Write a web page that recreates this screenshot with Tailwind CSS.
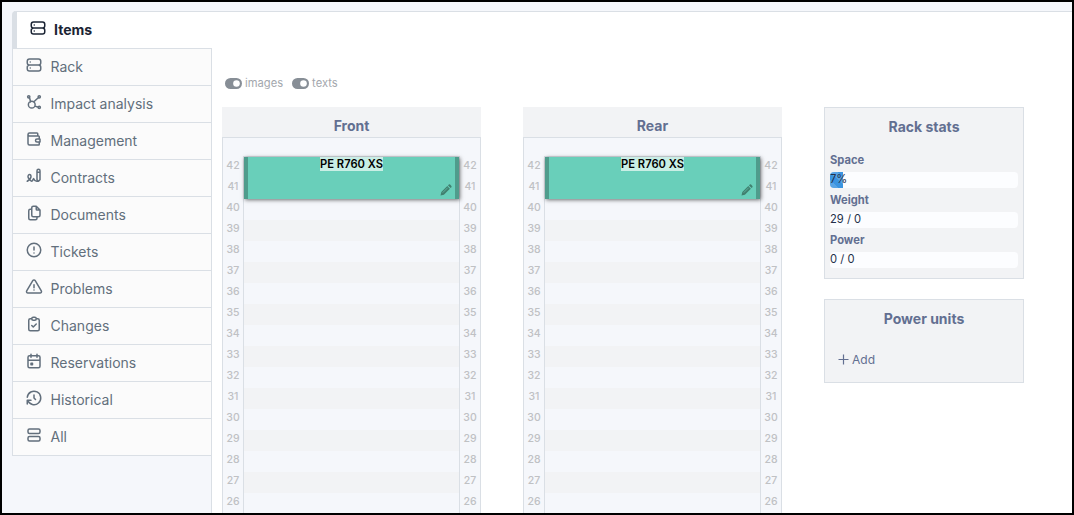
<!DOCTYPE html>
<html lang="en">
<head>
<meta charset="utf-8">
<title>Rack - Items</title>
<script src="https://cdn.jsdelivr.net/npm/@tailwindcss/browser@4"></script>
</head>
<body class="font-['Inter',sans-serif]">
<div class="w-[1074px] h-[515px] overflow-hidden border-2 border-black bg-[#f5f7fb] pl-[10px] pt-[9px] flex">
  <nav id="tabs" class="w-[199px] shrink-0 text-[14px] text-[#626f7c]">
    <a class="flex items-center w-[200px] h-[38px] relative border-t border-b border-[#dadfe5] border-l-[5px] border-l-[#dadfe5] rounded-tl-[4px] bg-white pl-[12px] pb-[2px] text-[#1b2434] font-bold">
      <svg class="size-[18px] mr-[7px] relative -top-px" viewBox="0 0 24 24" fill="none" stroke="currentColor" stroke-width="2" stroke-linecap="round" stroke-linejoin="round"><path d="M3 7a3 3 0 0 1 3-3h12a3 3 0 0 1 3 3v2a3 3 0 0 1-3 3H6a3 3 0 0 1-3-3zM3 15a3 3 0 0 1 3-3h12a3 3 0 0 1 3 3v2a3 3 0 0 1-3 3H6a3 3 0 0 1-3-3zM7 8v.01M7 16v.01"/></svg>Items</a>
  </nav>
  <main class="flex-1 border-t border-l border-[#dadfe5] bg-white pl-[10px] h-[502px]">
    <div class="flex items-center pt-[61px] h-[81px] pl-[3px] text-[11.2px] text-[#a3a7ad]">
      <svg class="w-[17px] h-[11px] mr-[3px]" viewBox="0 0 17 11"><rect width="17" height="11" rx="5.5" fill="#878e96"/><circle cx="11.5" cy="5.5" r="3.3" fill="#fff"/></svg>images
      <svg class="w-[17px] h-[11px] mr-[3px] ml-[9px]" viewBox="0 0 17 11"><rect width="17" height="11" rx="5.5" fill="#878e96"/><circle cx="11.5" cy="5.5" r="3.3" fill="#fff"/></svg>texts
    </div>
    <div class="flex items-start pt-[14px]">
      <section class="w-[259px] mr-[42px]">
        <h2 class="h-[30px] pt-[9px] bg-[#f2f3f5] text-center text-[14px] leading-5 font-bold text-[#626f91]">Front</h2>
        <div class="rack flex h-[420px] overflow-hidden border border-b-0 border-[#dadfe5] bg-[#f5f7fb] pt-[18px]"></div>
      </section>
      <section class="w-[259px] mr-[42px]">
        <h2 class="h-[30px] pt-[9px] bg-[#f2f3f5] text-center text-[14px] leading-5 font-bold text-[#626f91]">Rear</h2>
        <div class="rack flex h-[420px] overflow-hidden border border-b-0 border-[#dadfe5] bg-[#f5f7fb] pt-[18px]"></div>
      </section>
      <aside class="w-[200px]">
        <section class="h-[172px] border border-[#dadfe5] bg-[#f2f3f5] px-[5px] pt-[9px] text-[11.2px]">
          <h2 class="text-center text-[14px] leading-5 font-bold text-[#626f91]">Rack stats</h2>
          <h3 class="mt-[15px] leading-[17px] h-4 font-bold text-[#626f91]">Space</h3>
          <div class="mt-[4px] w-[188px] h-[16px] rounded-[4px] overflow-hidden bg-[#fcfdff] text-[#243049]">
            <p class="w-[13px] h-[16px] leading-[15px] whitespace-nowrap bg-[#3b94e0] bg-[linear-gradient(45deg,#ffffff26_25%,transparent_25%,transparent_50%,#ffffff26_50%,#ffffff26_75%,transparent_75%)] bg-[length:16px_16px]">7%</p>
          </div>
          <h3 class="mt-[4px] leading-[17px] h-4 font-bold text-[#626f91]">Weight</h3>
          <p class="mt-[4px] w-[188px] h-[16px] leading-[15px] rounded-[4px] bg-[#fcfdff] text-[#243049]">29 / 0</p>
          <h3 class="mt-[4px] leading-[17px] h-4 font-bold text-[#626f91]">Power</h3>
          <p class="mt-[4px] w-[188px] h-[16px] leading-[15px] rounded-[4px] bg-[#fcfdff] text-[#243049]">0 / 0</p>
        </section>
        <section class="mt-[20px] h-[84px] border border-[#dadfe5] bg-[#f2f3f5] pt-[9px]">
          <h2 class="text-center text-[14px] leading-5 font-bold text-[#626f91]">Power units</h2>
          <p class="mt-[21px] pl-[13px] flex items-center text-[12px] leading-5 text-[#626f91]">
            <svg class="size-[11px] mr-[3px] relative -top-px" viewBox="0 0 11 11" stroke="currentColor" stroke-width="1.2"><path d="M.5 5.5h10M5.5.5v10"/></svg>Add</p>
        </section>
      </aside>
    </div>
  </main>
</div>
<script>
const tabs = [
  ['Rack', 'M3 7a3 3 0 0 1 3-3h12a3 3 0 0 1 3 3v2a3 3 0 0 1-3 3H6a3 3 0 0 1-3-3zM3 15a3 3 0 0 1 3-3h12a3 3 0 0 1 3 3v2a3 3 0 0 1-3 3H6a3 3 0 0 1-3-3zM7 8v.01M7 16v.01'],
  ['Impact analysis', 'M3.500 5a1.500 1.500 0 1 0 3 0a1.500 1.500 0 1 0-3 0M17.500 5a1.500 1.500 0 1 0 3 0a1.500 1.500 0 1 0-3 0M17.500 19a1.500 1.500 0 1 0 3 0a1.500 1.500 0 1 0-3 0M4.500 15.500a4.500 4.500 0 1 0 9 0a4.500 4.500 0 1 0-9 0M6 6l1.500 6M18 6l-6.500 6M13.500 17.500l4 1.500'],
  ['Management', 'M17 8V5a1 1 0 0 0-1-1H6a2 2 0 0 0 0 4h12a1 1 0 0 1 1 1v3m0 4v3a1 1 0 0 1-1 1H6a2 2 0 0 1-2-2V6M20 12v4h-4a2 2 0 0 1 0-4h4'],
  ['Contracts', 'M20 17V5c0-1.100-.9-2-2-2s-2 .9-2 2v12l2 2zM16 7h4M3 19c3.300-2 5-4 5-6c0-3-1-3-2-3s-2.030 1.085-2 3c.034 2.048 1.658 2.877 2.500 4C8 19 9 19.500 10 18c.667-1 1.167-1.833 1.500-2.500c1 2.333 2.333 3.500 4 3.500h2.500'],
  ['Documents', 'M15 3v4a1 1 0 0 0 1 1h4M18 17h-7a2 2 0 0 1-2-2V5a2 2 0 0 1 2-2h4l5 5v7a2 2 0 0 1-2 2zM16 17v2a2 2 0 0 1-2 2H7a2 2 0 0 1-2-2V9a2 2 0 0 1 2-2h2'],
  ['Tickets', 'M3 12a9 9 0 1 0 18 0a9 9 0 1 0-18 0M12 8v4M12 16h.01'],
  ['Problems', 'M12 9v4M10.363 3.591L2.257 17.125a1.914 1.914 0 0 0 1.636 2.871h16.214a1.914 1.914 0 0 0 1.636-2.870L13.637 3.591a1.914 1.914 0 0 0-3.274 0zM12 16h.01'],
  ['Changes', 'M9 5H7a2 2 0 0 0-2 2v12a2 2 0 0 0 2 2h10a2 2 0 0 0 2-2V7a2 2 0 0 0-2-2h-2M9 5a2 2 0 0 1 2-2h2a2 2 0 0 1 0 4h-2a2 2 0 0 1-2-2M9 14l2 2l4-4'],
  ['Reservations', 'M4 7a2 2 0 0 1 2-2h12a2 2 0 0 1 2 2v12a2 2 0 0 1-2 2H6a2 2 0 0 1-2-2zM16 3v4M8 3v4M4 11h16M8 15h2v2H8z'],
  ['Historical', 'M12 8v4l2 2M3.050 11a9 9 0 1 1 .5 4M3 20v-5h5'],
  ['All', 'M4 6a2 2 0 0 1 2-2h12a2 2 0 0 1 2 2v2a2 2 0 0 1-2 2H6a2 2 0 0 1-2-2zM4 16a2 2 0 0 1 2-2h12a2 2 0 0 1 2 2v2a2 2 0 0 1-2 2H6a2 2 0 0 1-2-2z']
];
document.getElementById('tabs').insertAdjacentHTML('beforeend', tabs.map(([name, path]) => `
  <a class="flex items-center h-[37px] border-b border-l border-[#dadfe5] bg-[#fbfbfb] pl-[12px] pb-[2px]">
    <svg class="size-[18px] mr-[7.5px] relative -top-px" viewBox="0 0 24 24" fill="none" stroke="currentColor" stroke-width="2" stroke-linecap="round" stroke-linejoin="round"><path d="${path}"/></svg>${name}</a>`).join(''));

const units = Array.from({length: 17}, (_, i) => 42 - i);
const labels = units.map(u => `<li class="h-[21px] leading-[20px]">${u}</li>`).join('');
const slots = units.map((u, i) => `<li class="h-[21px] ${i % 2 ? 'bg-[#f2f3f5]' : ''}"></li>`).join('');
document.querySelectorAll('.rack').forEach(r => r.innerHTML = `
  <ol class="w-[20px] shrink-0 text-center text-[10.5px] font-medium text-[#bfc1c4]">${labels}</ol>
  <div class="w-[217px] h-[420px] shrink-0 relative border-t border-x border-[#dadfe5]">
    <ol>${slots}</ol>
    <div class="absolute top-0 left-0 w-[215px] h-[42px] bg-[#69cfba] border-x-4 border-[#4f9c8c] text-center leading-[14px] shadow-[1px_1px_4px_0_#00000090]">
      <span class="inline-block h-[14px] bg-[#c9eee5] text-[11.2px] leading-[15px] font-semibold text-black align-top">PE R760 XS</span>
      <svg class="absolute right-[3px] bottom-[3px] size-[12px]" viewBox="0 0 12 12" fill="#41806f"><path d="M.5 11.500l.8-3.400 6-6 2.600 2.600-6 6zM8 1.400l.8-.8q.7-.5 1.300 0l1.300 1.300q.5.6 0 1.300l-.8.8z"/><path d="M2.700 8.700l5-5" stroke="#69cfba" stroke-width=".6"/></svg>
    </div>
  </div>
  <ol class="w-[20px] shrink-0 text-center text-[10.5px] font-medium text-[#bfc1c4]">${labels}</ol>`);
</script>
</body>
</html>
